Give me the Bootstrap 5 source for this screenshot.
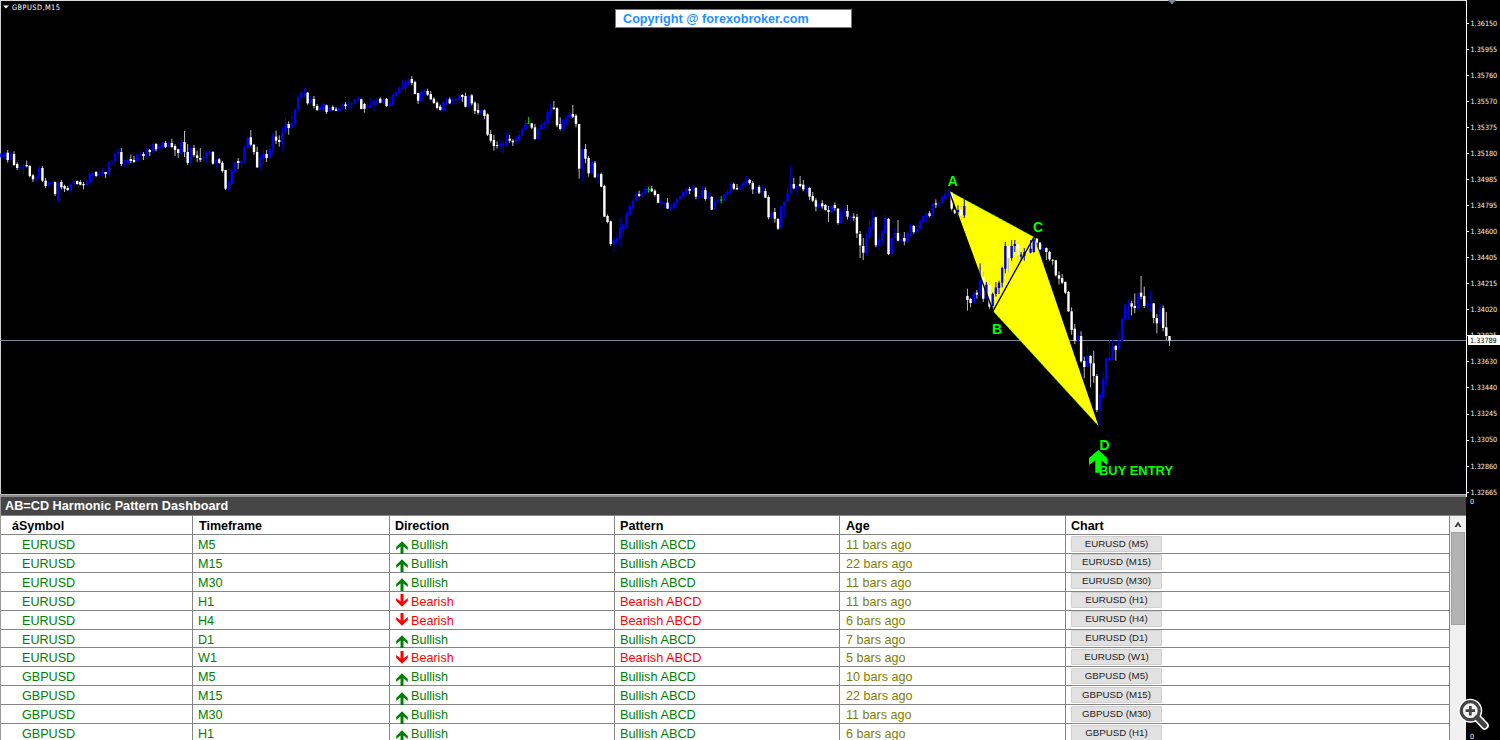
<!DOCTYPE html>
<html lang="en">
<head>
<meta charset="utf-8">
<title>GBPUSD,M15</title>
<link href="https://cdn.jsdelivr.net/npm/bootstrap@5.3.0/dist/css/bootstrap.min.css" rel="stylesheet">
<style>
body{background:#000;font-family:"Liberation Sans",Arial,sans-serif;font-size:12.6px;line-height:1;width:1500px;height:740px;overflow:hidden}
.terminal{height:740px}
.main{width:1466px;flex:none}
.chart{height:494px;border-top:1px solid #d5dbdb;border-left:1px solid #d0d0d0}
.chart svg{display:block;margin:-1px 0 0 -1px;width:1466px;height:494px}
.tiny{font-family:"DejaVu Sans Condensed","DejaVu Sans",sans-serif;font-stretch:condensed;font-size:7.2px}
.copy{left:614px;top:8px;width:237px;height:19px;border:1px solid #777;background:#fff;color:#1e90ff;font-weight:bold;font-size:12.65px;padding-left:7px;line-height:19px;white-space:nowrap}
.scale{width:34px;border-left:1px solid #fff;height:497px;padding-top:10.3px;color:#f4f4f4}
.scale div.price{height:26.05px;flex:none}
.price::before{content:"";width:2px;height:1px;background:#fff;margin-right:1.5px}
.now{left:2px;top:335px;width:32px;height:10px;background:#fff;color:#000;padding-left:2px;line-height:11px}
.panel{border-left:1px solid #999;height:246px;border-top:1px solid #bbb}
.titlebar{height:20px;background:#464646;border-top:2px solid #8c8c8c;color:#fff;font-weight:bold;font-size:12.7px;padding-left:4px;line-height:18px}
.gridbox{width:1449px;height:225px;background:#fff;border-top:1px solid #858585;overflow:hidden}
.line{height:18.9px;border-bottom:1px solid #858585;background:#fff;color:#008000;flex:none}
.line.head{height:19.1px;color:#000;font-weight:bold;font-size:12.5px}
.line>div{border-right:1px solid #858585;flex:none;line-height:20px;white-space:nowrap}
.line>div:nth-child(1){width:192px;padding-left:21px}
.line>div:nth-child(2){width:197px;padding-left:5px}
.line>div:nth-child(3){width:225px;padding-left:6px}
.line>div:nth-child(4){width:225px;padding-left:5px;font-size:12.75px;line-height:19px}
.line>div:nth-child(5){width:226px;padding-left:6px;color:#808000}
.line>div:nth-child(6){width:384px;padding-left:5px}
.line.head>div:nth-child(1){padding-left:11px}
.line.head>div:nth-child(2){padding-left:6px}
.line.head>div:nth-child(3){padding-left:5px}
.line.head>div:nth-child(4){font-size:12.6px;line-height:20px}
.line.head>div:nth-child(5){color:#000}
.bear{color:#f00!important}
.arrow{width:12px;height:13px;margin:2.5px 3px 0 0}
.arrow.up{margin-top:5.5px}
.btn.open{display:block;width:91px;height:16px;margin-top:.5px;padding:0;background:#e1e1e1;border:1px solid #d0d0d0;border-radius:1px;color:#222;font-size:9.7px;line-height:14px}
.track{width:16px;background:#f0f0f0;border-top:1px solid #858585}
.thumb{width:14px;height:93px;background:#b3b3b3;border:1px solid #a2a2a2;margin:0 0 0 1px}
.track .tip{height:16px}
.zoomer{left:1456px;top:696px}
</style>
</head>
<body>
<div class="terminal d-flex position-relative">
  <main class="main d-flex flex-column">
    <section class="chart position-relative">
      <svg viewBox="0 0 1466 494" id="plot">
        <path d="M0 340.5H1466" stroke="#778899" stroke-width="1"/>
        <path d="M949 191L1034 237L1098.5 426L993 311Z" fill="#ff0"/>
        <path d="M949 191L1034 237M993 311L1098.5 426" stroke="#00c800" stroke-width=".7" stroke-dasharray="2 2"/>
        <g id="candles"></g>
        <path d="M949 191L993 311L1034 237" fill="none" stroke="#000" stroke-width="1.4"/>
        <path d="M1168 0H1176L1172 4.5Z" fill="#778899"/>
        <path d="M3 5.5H9L6 8.5Z" fill="#fff"/>
        <path d="M1098.3 450L1107.2 458V465L1101.2 460.3V472.7H1095.3V460.3L1089 465V458Z" fill="#0f0"/>
        <g fill="#0f0" font-weight="bold" font-size="14" font-family="Liberation Sans, Arial, sans-serif">
          <text x="947.8" y="186">A</text><text x="992" y="334">B</text><text x="1033" y="232">C</text><text x="1099.5" y="450">D</text>
          <text x="1099" y="475" font-size="12.9" textLength="74">BUY ENTRY</text>
        </g>
        <text x="12" y="9.5" fill="#fff" font-family="DejaVu Sans Condensed, DejaVu Sans, sans-serif" font-size="7.4" textLength="48">GBPUSD,M15</text>
      </svg>
      <div class="copy position-absolute">Copyright @ forexobroker.com</div>
    </section>
    <section class="panel">
      <div class="titlebar">AB=CD Harmonic Pattern Dashboard</div>
      <div class="d-flex" style="height:225px">
        <div class="gridbox d-flex flex-column" id="rows">
          <div class="line head d-flex"><div>áSymbol</div><div>Timeframe</div><div>Direction</div><div>Pattern</div><div>Age</div><div>Chart</div></div>
        </div>
        <div class="track">
          <div class="tip d-flex align-items-center justify-content-center"><svg width="8" height="7" viewBox="0 0 8 7"><path d="M4 .5L7.5 6H5.3L4 3.5L2.7 6H.5Z" fill="#333"/></svg></div>
          <div class="thumb"></div>
        </div>
      </div>
    </section>
  </main>
  <aside class="position-relative tiny text-light">
    <div class="scale d-flex flex-column" id="scale"></div>
    <div class="now position-absolute">1.33789</div>
    <div class="position-absolute" style="left:4px;top:498px">0</div>
    <div class="position-absolute" style="left:4px;top:733px">0</div>
  </aside>
  <svg class="zoomer position-absolute" width="36" height="36" viewBox="0 0 36 36">
    <g fill="none" stroke-linecap="round">
      <path d="M21.5 22L28.7 29.6" stroke="#fff" stroke-width="8.2"/>
      <circle cx="14.3" cy="14.7" r="9" stroke="#fff" stroke-width="6"/>
      <circle cx="14.3" cy="14.7" r="7.5" fill="#f4f4f4"/>
      <path d="M21 21.5L28.6 29.5" stroke="#444" stroke-width="5"/>
      <circle cx="14.3" cy="14.7" r="9" stroke="#444" stroke-width="3.2"/>
    </g>
    <path d="M14.3 10V19.4M9.6 14.7H19" stroke="#444" stroke-width="2.8"/>
  </svg>
</div>
<script src="https://cdn.jsdelivr.net/npm/bootstrap@5.3.0/dist/js/bootstrap.bundle.min.js"></script>
<script>
// Each block: first y in px, then bars as colour + high,top,bottom,low in thirds of a pixel.
const bars = [
[60,`b276,280,292,296 b274,279,292,296 w270,278,300,308 b272,281,300,304 w274,282,315,318 w307,312,324,330 b317,322,324,330 b314,316,320,342 w302,315,319,322 w315,318,348,352
w342,346,358,366 b345,353,357,366 b318,324,353,356 w318,324,362,366 w354,362,378,384 b364,366,378,382 b366,366,370,375 w364,366,402,408 b364,366,423,423 w360,366,382,388
w374,378,386,396 w378,384,390,393 b368,372,392,398 b360,363,373,376 w361,363,372,374 w360,366,374,376 w366,372,376,388 b361,366,376,378 b338,342,368,372 b332,339,346,362
w333,336,348,351 b330,341,345,351 b324,336,342,348 w336,336,342,354 b304,306,342,346 b302,304,307,318 b274,280,304,318 b264,276,282,292 w264,276,312,318 b300,309,313,322
b284,300,310,314 w284,297,303,309 w288,300,306,309 b280,284,304,308 b274,282,285,290 w276,282,288,300 b264,270,285,292 w267,270,276,288 b249,252,273,280 w249,252,268,274
b252,258,268,280 b243,248,261,264 w243,249,261,264 b244,248,262,264 w236,249,261,264 w252,258,270,288 w266,268,279,294 b232,246,279,284 w213,246,276,291 w252,276,309,315
b255,264,309,312 w255,264,285,291 w272,286,294,306 w264,294,299,306 b258,290,295,310 b272,276,294,308 b262,274,280,288 w273,276,311,314 b288,300,312,330 w294,298,309,312
w303,308,333,338 w330,330,386,390 b360,368,386,393 b330,330,372,374 b303,306,334,340 w294,303,309,327 b298,303,309,324 b255,262,304,308 b228,234,262,270 w210,232,254,258
w252,254,276,284 w260,276,322,324 b282,294,322,330 b266,282,296,312 w270,282,294,306 b255,268,294,296 b218,224,270,284 w212,230,242,252 w226,240,246,260 b204,216,248,272
b172,192,216,222 w184,192,204,224 b168,190,203,204 b144,150,192,196 b106,112,150,156 b93,98,114,118 b84,99,105,110 w96,98,130,134 b108,118,130,132 w108,117,138,146
w132,138,150,153 b137,142,150,152 b128,132,148,158 w134,136,156,162 b138,140,154,156 w136,141,150,152 w141,148,153,154 b138,142,153,155 b130,134,142,148 w126,133,138,148
b122,130,133,148 b128,130,132,146 b115,117,132,132 b108,114,119,126 w116,118,147,148 w128,132,147,158 b128,138,144,160 b115,134,142,144 b118,122,136,153 b112,116,122,136
w112,116,128,130 b114,118,128,132 w114,117,138,140 b116,128,138,140 b100,104,134,138 b94,96,108,118 b80,82,98,102 b60,82,88,88 b60,66,84,96 b55,58,68,74
w48,57,69,75 w62,66,102,103 w99,99,122,132 b90,94,123,124 b88,93,96,105 w86,93,104,108 w93,102,118,120 w112,116,129,132 w124,128,144,148 w134,140,150,152
b124,127,153,154 b113,117,128,136 w112,118,130,132 b112,118,127,134 b114,116,120,134 b102,105,118,123 w102,105,111,126 w98,108,140,142 b105,107,142,142 w102,106,130,136
w124,128,153,162 w130,150,158,164 b147,150,160,166 w148,151,168,178 w160,163,224,228 w210,222,242,248 w225,240,258,272 w244,255,258,266 b240,252,258,272 b240,250,256,278
b216,237,250,260 w225,236,242,248 w238,242,247,258 b228,235,247,254 b212,225,238,248 b204,208,226,228 b180,189,210,212 g171,189,191,192 w189,190,203,207 w192,202,237,240
b204,207,237,240 b186,194,208,208 b182,188,196,206 b150,156,192,206 b132,144,160,174 w123,143,147,150 w142,144,196,202 w172,192,207,212 b176,180,208,220 b168,174,184,196
b147,162,174,186 w135,162,170,174 w162,167,192,202 w192,192,326,356 b264,267,327,364 w252,267,296,310 w288,294,340,350`],
[90,`b207,216,250,254 w213,218,262,264 b249,252,262,278 w248,252,290,292 w284,288,380,381 w373,378,396,400 w392,394,462,468 b440,450,462,486 b432,444,454,468 b384,411,444,471
b400,404,418,436 b366,374,402,412 b346,348,376,380 b328,332,352,360 b302,312,332,334 w302,312,318,321 b306,309,320,322 b291,294,311,314 g290,297,300,308 w288,296,304,306
w298,302,315,320 w312,312,338,340 b322,333,340,345 b337,338,342,352 w324,338,356,357 b342,354,358,362 b335,339,355,360 b324,328,340,352 b316,319,328,330 b304,306,320,322
b292,297,308,315 w291,297,302,312 b286,294,303,306 w291,294,320,328 b298,318,322,334 b288,300,322,324 w292,300,327,332 b306,322,327,330 w318,321,359,360 b328,332,357,358
b320,330,334,342 g318,328,332,340 b310,312,332,334 b298,306,314,316 b278,280,308,308 w278,282,296,300 w282,294,298,300 b286,290,298,302 b275,277,290,304 b258,270,280,286
w267,270,279,284 w273,279,298,312 b286,292,300,308 w285,291,308,312 b288,304,308,312 w295,303,323,324 w316,321,382,388 b360,370,382,394 w354,366,386,398 w384,387,416,420`],
[150,`b166,168,234,240 b154,155,168,202 b112,129,156,156 b48,102,132,134 w84,102,115,118 b104,108,117,136 w78,102,108,112 w90,104,118,124 b108,118,122,130 w112,114,140,150
w126,138,152,156 w144,151,170,184 b156,162,172,184 w150,160,169,176 w162,165,180,182 w168,180,186,216 b166,168,187,190 w157,165,174,182 w174,176,219,224 b170,183,219,220
b170,182,185,198 w165,183,200,208 b196,200,204,212 w190,200,204,212 w192,201,250,264 w243,252,286,324 w264,288,308,330 b248,262,310,318 b208,230,264,268 b178,202,236,236
w200,202,286,292 b250,268,286,300 b240,248,272,286 b194,204,250,262 w204,207,312,315 b262,264,312,321 b232,249,264,264 w210,249,272,274 b252,268,274,278 w246,264,274,286
b244,249,274,280 b222,226,252,258 w225,228,246,252 b226,238,246,250 b210,212,238,240 b196,198,214,220 b188,190,202,218 w183,190,198,202 b159,162,198,200 w148,160,164,174
b153,158,164,172 b138,140,160,162 b122,133,146,148 b120,130,136,140`],
[160,`w96,98,146,152 w146,150,158,162 b136,150,156,162 w138,148,168,172 b118,138,166,174 w386,408,420,452 w414,417,429,442 b392,400,428,430 w390,398,404,416 b310,360,404,414
w336,350,416,426 b366,374,412,416 w372,374,440,446 b398,402,438,446 b366,382,402,410 b362,368,384,402 b320,324,368,382 b246,258,326,340 w256,258,294,338 b240,258,294,302
b240,252,258,276 w250,252,286,296 b276,284,290,298 b264,276,288,302 w264,272,278,280 b240,266,278,280 b234,238,276,278 w234,236,248,258 w246,248,268,270 b252,264,268,276
w262,264,276,300 w272,276,298,302 w298,299,302,314 w300,301,346,350 w334,346,356,374 w342,354,368,372 w364,366,398,402 w393,396,454,456 w442,454,510,524 w492,506,542,552
b514,526,542,548`],
[310,`w64,78,154,158 w140,153,171,204 b108,138,170,172 w136,138,160,232 w122,160,198,218 w192,198,300,306 b248,254,300,346 b182,206,262,264 b140,147,208,226 b90,142,152,154
b86,108,148,150 w105,108,120,152 b60,92,118,120 b24,28,94,96`],
[160,`b432,434,480,488 b420,430,436,480 w422,430,440,466 w400,438,444,460 b396,400,446,450 w348,398,410,418 w380,408,438,444 b420,430,436,456 b392,430,434,456 w430,430,474,490
w462,474,490,520 b432,446,490,494 w436,444,504,514 w456,502,528,540 w528,528,542,558`]
];
const ink = {w:["#fff","#bbb"], b:["#00f","#0000d8"], g:["#00c000","#00e000"]};
let out = "", i = 0;
for (const [y0, text] of bars) for (const bar of text.split(/\s+/)) {
  const [body, wick] = ink[bar[0]];
  const [h, t, b, l] = bar.slice(1).split(",").map(v => y0 + v / 3);
  const x = 1.4 + 3.157 * i++;
  out += `<rect x="${(x-.5).toFixed(2)}" y="${h.toFixed(2)}" width="1" height="${(l-h).toFixed(2)}" fill="${wick}"/>`
       + `<rect x="${(x-1.2).toFixed(2)}" y="${t.toFixed(2)}" width="2.4" height="${Math.max(1,b-t).toFixed(2)}" fill="${body}"/>`;
}
document.getElementById("candles").innerHTML = out;

document.getElementById("scale").innerHTML = ["1.36150","1.35955","1.35760","1.35570","1.35375","1.35180","1.34985","1.34795","1.34600","1.34405","1.34215","1.34020","1.33825","1.33630","1.33440","1.33245","1.33050","1.32860","1.32665"]
  .map(p => `<div class="price d-flex align-items-center">${p}</div>`).join("");

const up = '<svg class="arrow up" viewBox="0 0 12 13"><path d="M6 .3L11.8 6V9L7.5 5.4V13H4.5V5.4L.2 9V6Z" fill="#008000"/></svg>';
const down = '<svg class="arrow" viewBox="0 0 12 13"><path d="M6 12.7L11.8 7V4L7.5 7.6V0H4.5V7.6L.2 4V7Z" fill="#f00"/></svg>';
const signals = [["EURUSD","M5",1,11],["EURUSD","M15",1,22],["EURUSD","M30",1,11],["EURUSD","H1",0,11],["EURUSD","H4",0,6],["EURUSD","D1",1,7],["EURUSD","W1",0,5],["GBPUSD","M5",1,10],["GBPUSD","M15",1,22],["GBPUSD","M30",1,11],["GBPUSD","H1",1,6]];
document.getElementById("rows").insertAdjacentHTML("beforeend", signals.map(([s,tf,bull,age]) => {
  const word = bull ? "Bullish" : "Bearish", tone = bull ? "" : "bear";
  return `<div class="line d-flex"><div>${s}</div><div>${tf}</div><div class="d-flex align-items-start ${tone}">${bull?up:down}${word}</div><div class="${tone}">${word} ABCD</div><div>${age} bars ago</div><div><button class="btn open">${s} (${tf})</button></div></div>`;
}).join(""));
</script>
</body>
</html>
